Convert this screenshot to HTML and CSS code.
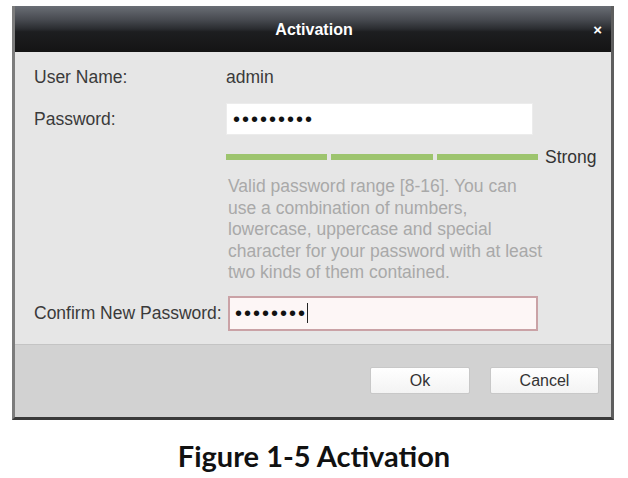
FILE: index.html
```html
<!DOCTYPE html>
<html>
<head>
<meta charset="utf-8">
<link rel="stylesheet" href="styles.css">
</head>
<body>
<div class="dialog">
  <div class="titlebar">
    <span></span>
    <span class="title">Activation</span>
    <span class="close">&#215;</span>
  </div>
  <div class="content">
    <div class="row row-user">
      <span class="label">User Name:</span>
      <span class="value">admin</span>
    </div>
    <div class="row row-pass">
      <span class="label">Password:</span>
      <div class="input"><span class="dots">•••••••••</span></div>
    </div>
    <div class="row row-bars">
      <span class="label"></span>
      <div class="bars">
        <span class="bar"></span><span class="bar"></span><span class="bar"></span>
      </div>
      <span class="strong">Strong</span>
    </div>
    <div class="row row-help">
      <span class="label"></span>
      <p class="help">Valid password range [8-16]. You can<br>use a combination of numbers,<br>lowercase, uppercase and special<br>character for your password with at least<br>two kinds of them contained.</p>
    </div>
    <div class="row row-confirm">
      <span class="label">Confirm New Password:</span>
      <div class="input confirm"><span class="dots">••••••••</span><span class="caret"></span></div>
    </div>
  </div>
  <div class="footer">
    <button class="btn btn-ok">Ok</button>
    <button class="btn btn-cancel">Cancel</button>
  </div>
</div>
<div class="caption">Figure 1-5 Activation</div>
</body>
</html>
```
FILE: styles.css
```css
html, body {
  margin: 0;
  padding: 0;
  background: #ffffff;
}
body {
  width: 628px;
  height: 478px;
  overflow: hidden;
  font-family: "Liberation Sans", Arial, sans-serif;
}
.dialog {
  margin: 6px 0 0 12px;
  width: 596px;
  border-left: 3px solid #7c7c7c;
  border-right: 3px solid #5e5e5e;
  border-bottom: 3px solid #3a3a3a;
  background: #e6e6e6;
}
.titlebar {
  height: 46px;
  display: grid;
  grid-template-columns: 1fr auto 1fr;
  align-items: center;
  background: linear-gradient(#6a6e75 0%, #474a50 30%, #2a2c30 50%, #1d1e20 56%, #141414 100%);
  padding: 0 9px 0 11px;
}
.title {
  color: #ffffff;
  font-weight: bold;
  font-size: 16px;
  padding-top: 2px;
}
.close {
  justify-self: end;
  color: #ffffff;
  font-weight: bold;
  font-size: 15px;
  line-height: 1;
}
.content {
  height: 292px;
  box-sizing: border-box;
  padding: 12px 0 0 19px;
  color: #3a3a3a;
  font-size: 17.5px;
}
.row {
  display: flex;
  align-items: center;
}
.label {
  width: 192px;
  flex: none;
}
.row-user {
  height: 26px;
}
.row-pass {
  margin-top: 13px;
}
.input {
  width: 307px;
  height: 32px;
  box-sizing: border-box;
  background: #ffffff;
  border: 1px solid #ececec;
  display: flex;
  align-items: center;
  padding-left: 6px;
}
.dots {
  font-size: 20px;
  letter-spacing: 2px;
  color: #111111;
  line-height: 1;
}
.row-bars {
  margin-top: 11px;
  height: 22px;
}
.bars {
  width: 312px;
  display: flex;
  gap: 4px;
}
.bar {
  flex: 1;
  height: 6px;
  background: #9dc46e;
}
.strong {
  margin-left: 7px;
  color: #333333;
}
.row-help {
  margin-top: 8px;
  align-items: flex-start;
}
.help {
  margin: 0 0 0 2px;
  font-size: 17.5px;
  line-height: 21.5px;
  color: #a9a9a9;
}
.row-confirm {
  margin-top: 12px;
}
.input.confirm {
  margin-left: 2px;
  width: 310px;
  height: 35px;
  border: 2px solid #caa2a6;
  background: #fdf6f6;
  padding-left: 5px;
}
.dots + .caret {
  display: inline-block;
  width: 1px;
  height: 20px;
  background: #222222;
}
.footer {
  height: 73px;
  box-sizing: border-box;
  background: #d2d2d2;
  border-top: 1px solid #c4c4c4;
  display: flex;
  justify-content: flex-end;
  align-items: flex-start;
  gap: 20px;
  padding: 22px 12px 0 0;
}
.btn {
  height: 27px;
  border: 1px solid #c8c8c8;
  border-radius: 2px;
  background: linear-gradient(#ffffff, #f3f3f3);
  font-family: "Liberation Sans", Arial, sans-serif;
  font-size: 16px;
  color: #333333;
  padding: 0;
}
.btn-ok {
  width: 100px;
}
.btn-cancel {
  width: 109px;
}
.caption {
  margin-top: 20px;
  text-align: center;
  font-family: Lato, "Open Sans", sans-serif;
  font-weight: bold;
  font-size: 29px;
  line-height: 32px;
  color: #111111;
}
```
